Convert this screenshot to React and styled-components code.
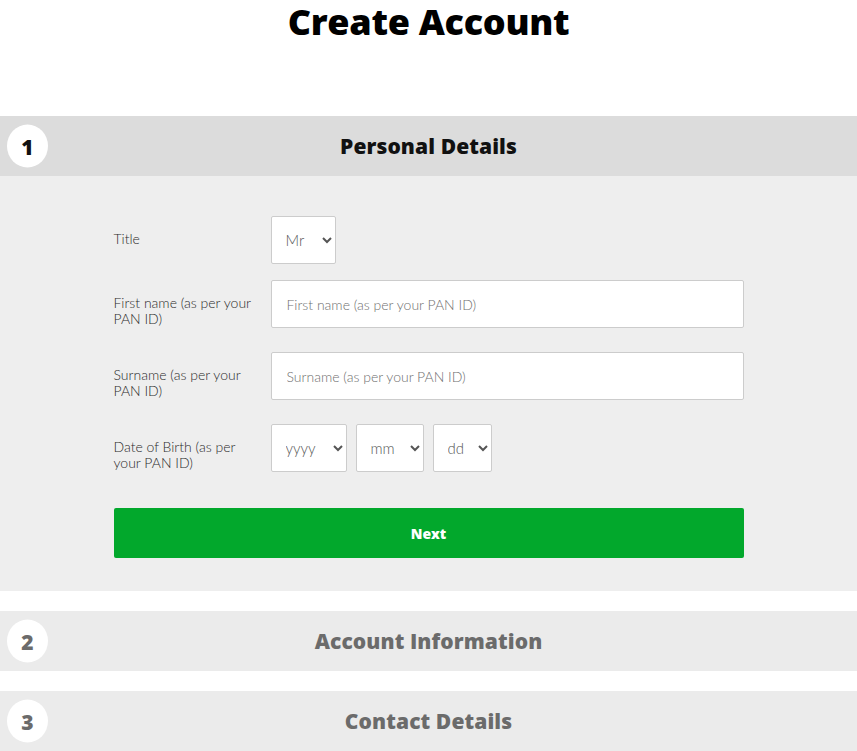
import React from "react";
import styled, { createGlobalStyle } from "styled-components";

const GlobalStyle = createGlobalStyle`
  html, body { margin: 0; padding: 0; background: #ffffff; }
  body { font-family: "Lato", "Liberation Sans", sans-serif; color: #111; }
  * { box-sizing: border-box; }
`;

const Page = styled.div`
  width: 100%;
  display: flex;
  flex-direction: column;
`;

const Heading = styled.h1`
  margin: 0;
  padding-top: 4px;
  height: 116px;
  text-align: center;
  font-family: "Open Sans", "Lato", sans-serif;
  font-weight: 800;
  font-size: 36px;
  line-height: 36px;
  letter-spacing: -0.3px;
  color: #000;
`;

const Section = styled.section`
  display: flex;
  flex-direction: column;
  margin-bottom: ${(p) => (p.$last ? "0" : "20px")};
`;

const SectionHeader = styled.div`
  position: relative;
  height: 60px;
  background: ${(p) => (p.$active ? "#dcdcdc" : "#ebebeb")};
  display: flex;
  align-items: center;
  justify-content: center;
`;

const StepCircle = styled.div`
  position: absolute;
  left: 7px;
  top: 50%;
  transform: translateY(-50%);
  width: 41px;
  height: 43px;
  border-radius: 50%;
  background: #fff;
  display: flex;
  align-items: center;
  justify-content: center;
  font-family: "Open Sans", "Lato", sans-serif;
  font-weight: 800;
  font-size: 21px;
  color: ${(p) => (p.$active ? "#111" : "#6b6b6b")};
`;

const SectionTitle = styled.h2`
  margin: 0;
  font-family: "Open Sans", "Lato", sans-serif;
  font-weight: 800;
  font-size: 21px;
  letter-spacing: 0.1px;
  color: ${(p) => (p.$active ? "#111" : "#6b6b6b")};
`;

const SectionBody = styled.div`
  background: #eeeeee;
  padding: 40px 0 33px;
  display: flex;
  justify-content: center;
`;

const Form = styled.form`
  width: 630px;
  display: grid;
  grid-template-columns: 157px 473px;
  row-gap: 24px;
`;

const Label = styled.label`
  padding-top: 15px;
  padding-right: 8px;
  font-weight: 300;
  font-size: 14px;
  line-height: 16px;
  color: #2b2b2b;
`;

const Field = styled.div`
  display: flex;
  gap: 9px;
  margin-bottom: ${(p) => p.$mb || "0"};
`;

const TextInput = styled.input`
  width: 100%;
  height: 48px;
  border: 1px solid #cccccc;
  border-radius: 2px;
  background: #fff;
  padding: 0 15px;
  font-family: "Lato", sans-serif;
  font-weight: 300;
  font-size: 14px;
  color: #333;
  &::placeholder { color: #6f6f6f; opacity: 1; }
`;

const Select = styled.select`
  width: ${(p) => p.$w}px;
  height: 48px;
  border: 1px solid #cccccc;
  border-radius: 2px;
  background: #fff;
  padding: 0 6px 0 10px;
  font-family: "Lato", sans-serif;
  font-weight: 300;
  font-size: 15px;
  color: #555;
`;

const NextButton = styled.button`
  grid-column: 1 / -1;
  margin-top: 12px;
  height: 50px;
  border: none;
  border-radius: 2px;
  background: #02a82c;
  color: #fff;
  font-family: "Open Sans", "Lato", sans-serif;
  font-weight: 800;
  font-size: 14px;
  cursor: pointer;
`;

export default function App() {
  return (
    <Page>
      <GlobalStyle />
      <Heading>Create Account</Heading>

      <Section>
        <SectionHeader $active>
          <StepCircle $active>1</StepCircle>
          <SectionTitle $active>Personal Details</SectionTitle>
        </SectionHeader>
        <SectionBody>
          <Form onSubmit={(e) => e.preventDefault()}>
            <Label>Title</Label>
            <Field $mb="-8px">
              <Select $w={65} defaultValue="Mr">
                <option>Mr</option>
                <option>Mrs</option>
                <option>Ms</option>
              </Select>
            </Field>

            <Label>First name (as per your PAN ID)</Label>
            <Field>
              <TextInput placeholder="First name (as per your PAN ID)" />
            </Field>

            <Label>Surname (as per your PAN ID)</Label>
            <Field>
              <TextInput placeholder="Surname (as per your PAN ID)" />
            </Field>

            <Label>Date of Birth (as per your PAN ID)</Label>
            <Field>
              <Select $w={76} defaultValue="yyyy">
                <option>yyyy</option>
              </Select>
              <Select $w={68} defaultValue="mm">
                <option>mm</option>
              </Select>
              <Select $w={59} defaultValue="dd">
                <option>dd</option>
              </Select>
            </Field>

            <NextButton type="submit">Next</NextButton>
          </Form>
        </SectionBody>
      </Section>

      <Section>
        <SectionHeader>
          <StepCircle>2</StepCircle>
          <SectionTitle>Account Information</SectionTitle>
        </SectionHeader>
      </Section>

      <Section $last>
        <SectionHeader>
          <StepCircle>3</StepCircle>
          <SectionTitle>Contact Details</SectionTitle>
        </SectionHeader>
      </Section>
    </Page>
  );
}
